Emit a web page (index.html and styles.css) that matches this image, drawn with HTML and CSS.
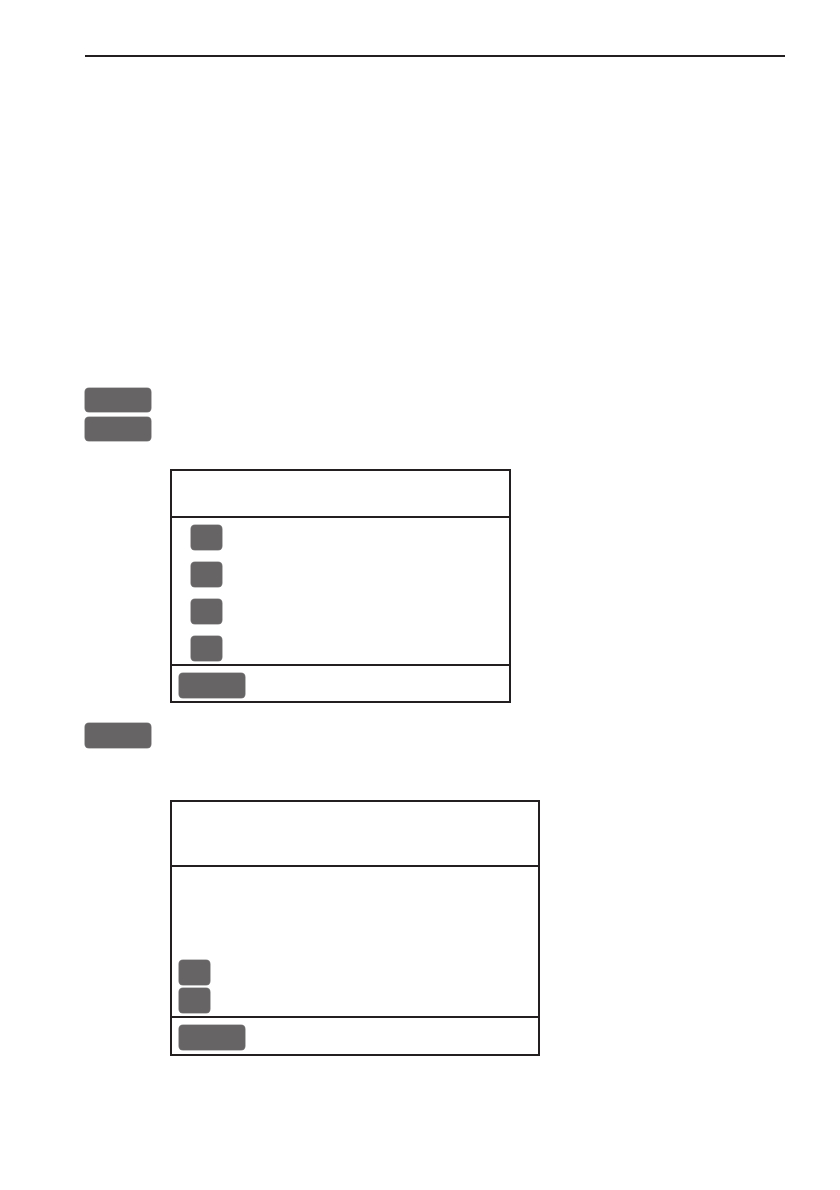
FILE: index.html
```html
<!DOCTYPE html>
<html lang="en">
<head>
<meta charset="utf-8">
<title>Manual page</title>
<link rel="stylesheet" href="styles.css">
</head>
<body>
<div class="page">
  <div class="rule"></div>

  <div class="key-stack">
    <div class="key key-wide"></div>
    <div class="key key-wide"></div>
  </div>

  <div class="screen screen-one">
    <div class="screen-head head-one"></div>
    <div class="screen-body body-one">
      <div class="key key-small"></div>
      <div class="key key-small"></div>
      <div class="key key-small"></div>
      <div class="key key-small"></div>
    </div>
    <div class="screen-foot foot-one">
      <div class="key key-wide"></div>
    </div>
  </div>

  <div class="key-stack stack-two">
    <div class="key key-wide"></div>
  </div>

  <div class="screen screen-two">
    <div class="screen-head head-two"></div>
    <div class="screen-body body-two">
      <div class="key key-small"></div>
      <div class="key key-small"></div>
    </div>
    <div class="screen-foot foot-two">
      <div class="key key-wide"></div>
    </div>
  </div>
</div>
</body>
</html>
```

FILE: styles.css
```css
html, body {
  margin: 0;
  padding: 0;
  background: #ffffff;
  font-family: "Liberation Sans", Arial, sans-serif;
}

.page {
  width: 840px;
  height: 1190px;
  padding-left: 85px;
  padding-top: 55px;
  box-sizing: border-box;
  display: flex;
  flex-direction: column;
  align-items: flex-start;
}

.rule {
  width: 700px;
  height: 2px;
  background: #231f20;
}

.key {
  background: #666465;
  border-radius: 4px;
  box-shadow: 0 0 0 0.6px #8d8b8b;
}

.key-wide {
  width: 66px;
  height: 24px;
}

.key-small {
  width: 31px;
  height: 25px;
}

.key-stack {
  margin-top: 331px;
  display: flex;
  flex-direction: column;
  gap: 5px;
}

.stack-two {
  margin-top: 20px;
}

.stack-two .key-wide {
  height: 25px;
}

.screen {
  margin-left: 85px;
  border: 2px solid #231f20;
  display: flex;
  flex-direction: column;
}

.screen-one {
  margin-top: 28px;
  width: 337px;
}

.screen-two {
  margin-top: 52px;
  width: 366px;
}

.screen-head {
  border-bottom: 2px solid #231f20;
}

.head-one { height: 45px; }
.head-two { height: 63px; }

.screen-body {
  display: flex;
  flex-direction: column;
  border-bottom: 2px solid #231f20;
  box-sizing: border-box;
}

.body-one {
  height: 148px;
  padding: 7px 0 3px 19px;
  gap: 12px;
}

.body-two {
  height: 151px;
  padding: 0 0 3px 7px;
  gap: 3px;
  justify-content: flex-end;
}

.screen-foot {
  box-sizing: border-box;
  padding: 7px 0 0 7px;
}

.foot-one { height: 35px; }
.foot-two { height: 36px; }

.screen-foot .key-wide {
  height: 25px;
}
```
